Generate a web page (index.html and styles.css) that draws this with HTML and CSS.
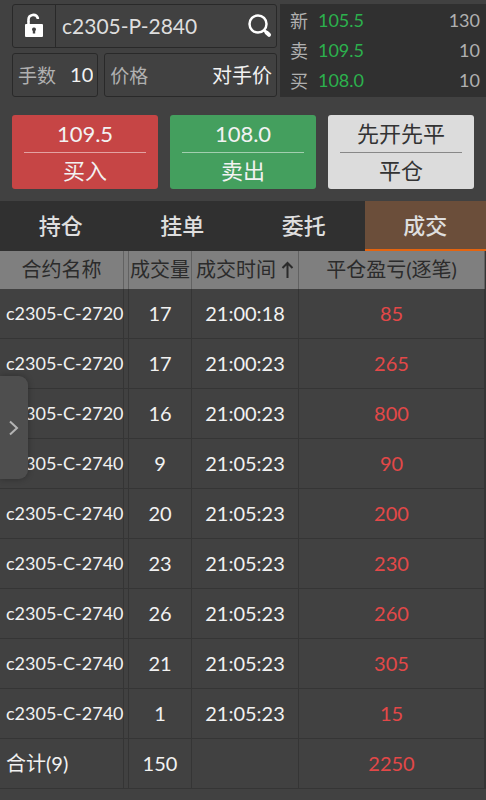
FILE: index.html
```html
<!DOCTYPE html>
<html lang="zh-CN">
<head>
    <meta charset="UTF-8">
    <meta name="viewport" content="width=device-width, initial-scale=1">
    <title>成交</title>
    <link rel="stylesheet" href="styles.css">
</head>
<body>
<header class="top">
    <form class="order">
        <div class="field contract">
            <button type="button" class="lock" aria-label="锁定合约">
                <svg width="20" height="26" viewBox="0 0 20 26">
                    <path d="M4.500 8.500V6.500a4.800 4.800 0 0 1 9.300-1.500V6" fill="none" stroke="#fff" stroke-width="2.600"/>
                    <path fill="#fff" fill-rule="evenodd" d="M2 11h16a1 1 0 0 1 1 1v11a1 1 0 0 1-1 1H2a1 1 0 0 1-1-1V12a1 1 0 0 1 1-1zM10 14.500a2 2 0 0 0-1.200 3.600V20.500h2.400v-2.400A2 2 0 0 0 10 14.500z"/>
                    <path d="M4.500 8v4" fill="none" stroke="#fff" stroke-width="2.600"/>
                </svg>
            </button>
            <input type="text" class="code" aria-label="合约" value="c2305-P-2840">
            <button type="button" class="search" aria-label="搜索">
                <svg width="26" height="26" viewBox="0 0 26 26" fill="none" stroke="#fff" stroke-linecap="round">
                    <circle cx="11" cy="11" r="8.500" stroke-width="2.500"/>
                    <path d="M17.500 17.500l1.500 1.500" stroke-width="2.500"/>
                    <path d="M19.500 19.500l2.500 2.300" stroke-width="4"/>
                </svg>
            </button>
        </div>
        <div class="field lots">
            <label for="lots">手数</label>
            <input type="text" id="lots" value="10">
        </div>
        <div class="field price">
            <label for="price">价格</label>
            <input type="text" id="price" value="对手价">
        </div>
    </form>
    <div class="quote">
        <div class="quote-row"><span>新</span><b>105.5</b><span>130</span></div>
        <div class="quote-row"><span>卖</span><b>109.5</b><span>10</span></div>
        <div class="quote-row"><span>买</span><b>108.0</b><span>10</span></div>
    </div>
</header>

<div class="actions">
    <button type="button" class="action buy"><span>109.5</span><span>买入</span></button>
    <button type="button" class="action sell"><span>108.0</span><span>卖出</span></button>
    <button type="button" class="action close"><span>先开先平</span><span>平仓</span></button>
</div>

<nav class="tabs">
    <a href="#position">持仓</a>
    <a href="#pending">挂单</a>
    <a href="#orders">委托</a>
    <a href="#trades" class="active">成交</a>
</nav>

<main>
    <table class="trades" id="trades">
        <colgroup>
            <col class="col-name">
            <col class="col-volume">
            <col class="col-time">
            <col>
        </colgroup>
        <thead>
        <tr>
            <th>合约名称</th>
            <th>成交量</th>
            <th>成交时间<svg class="sort" width="13" height="18" viewBox="0 0 13 18" fill="none" stroke="#2b2b2b" stroke-width="2"><path d="M6.500 17V2M1.500 7l5-5 5 5"/></svg></th>
            <th>平仓盈亏(逐笔)</th>
        </tr>
        </thead>
        <tbody>
        <tr><td>c2305-C-2720</td><td>17</td><td>21:00:18</td><td>85</td></tr>
        <tr><td>c2305-C-2720</td><td>17</td><td>21:00:23</td><td>265</td></tr>
        <tr><td>c2305-C-2720</td><td>16</td><td>21:00:23</td><td>800</td></tr>
        <tr><td>c2305-C-2740</td><td>9</td><td>21:05:23</td><td>90</td></tr>
        <tr><td>c2305-C-2740</td><td>20</td><td>21:05:23</td><td>200</td></tr>
        <tr><td>c2305-C-2740</td><td>23</td><td>21:05:23</td><td>230</td></tr>
        <tr><td>c2305-C-2740</td><td>26</td><td>21:05:23</td><td>260</td></tr>
        <tr><td>c2305-C-2740</td><td>21</td><td>21:05:23</td><td>305</td></tr>
        <tr><td>c2305-C-2740</td><td>1</td><td>21:05:23</td><td>15</td></tr>
        </tbody>
        <tfoot>
        <tr><td>合计(9)</td><td>150</td><td></td><td>2250</td></tr>
        </tfoot>
    </table>
</main>

<!-- side drawer handle -->
<button type="button" class="drawer" aria-label="展开">
    <svg width="10" height="16" viewBox="0 0 10 16" fill="none" stroke="#b4b4b4" stroke-width="2"><path d="M1 1.500L8 8l-7 6.500"/></svg>
</button>
</body>
</html>
```
FILE: styles.css
```css
* {
    box-sizing: border-box;
}

body {
    margin: 0;
    background-color: #414141;
    color: #f2f2f2;
    font-family: Lato, "Noto Sans CJK SC", sans-serif;
    font-size: 20px;
}

button, input {
    font: inherit;
    color: inherit;
    background: none;
    border: none;
    padding: 0;
    margin: 0;
    min-width: 0;
}

button {
    cursor: pointer;
}

.top {
    display: grid;
    grid-template-columns: 9fr 7fr;
    gap: 3px;
    padding: 4px 0 0 12px;
}

.order {
    display: grid;
    grid-template-columns: 1fr 2fr;
    gap: 5px 6px;
}

.field {
    display: flex;
    align-items: center;
    height: 44px;
    border: 1px solid #292929;
    border-radius: 3px;
}

.field label {
    color: #b0b0b0;
    font-size: 19px;
    white-space: nowrap;
}

.field input {
    flex: 1;
    width: 0;
}

.contract {
    grid-column: 1 / 3;
}

.lock {
    width: 43px;
    height: 42px;
    border-right: 1px solid #292929;
    display: grid;
    place-items: center;
}

.contract .code {
    padding: 0 0 2px 6px;
    font-size: 21px;
    color: #dedede;
}

.search {
    display: grid;
    margin-right: 3px;
}

.lots, .price {
    padding: 0 4px 2px 5px;
}

.lots input, .price input {
    text-align: right;
}

.quote {
    background-color: #303030;
    padding: 1px 6px 0 10px;
}

.quote-row {
    display: flex;
    align-items: center;
    height: 30px;
    color: #b0b0b0;
    font-size: 18px;
}

.quote-row b {
    flex: 1;
    padding-left: 10px;
    font-weight: normal;
    color: #2cb14d;
}

.actions {
    display: grid;
    grid-template-columns: repeat(3, 1fr);
    gap: 12px;
    padding: 18px 12px 12px;
}

.action {
    height: 74px;
    padding: 0 12px;
    border-radius: 3px;
    font-size: 22px;
    line-height: 36px;
}

.action span {
    display: block;
}

.action span:first-child {
    border-bottom: 1px solid #ffffff80;
}

.buy {
    background-color: #c64545;
}

.sell {
    background-color: #449f5e;
}

.close {
    background-color: #dcdcdc;
    color: #333;
}

.close span:first-child {
    border-color: #888;
}

.tabs {
    display: flex;
    background-color: #303030;
}

.tabs a {
    flex: 1;
    height: 50px;
    line-height: 50px;
    font-size: 22px;
    font-weight: 500;
    text-align: center;
    text-decoration: none;
    color: #dedede;
}

.tabs .active {
    background-color: #6b4e3a;
    box-shadow: inset 0 -2px #e5640f;
}

.trades {
    width: 100%;
    table-layout: fixed;
    border-collapse: separate;
    border-spacing: 0;
    border-right: 1px solid #353535;
}

.col-name {
    width: 129px;
}

.col-volume {
    width: 63px;
}

.col-time {
    width: 107px;
}

.trades th, .trades td {
    padding: 0 0 2px;
    text-align: center;
    white-space: nowrap;
    border-right: 1px solid #353535;
}

.trades th {
    height: 38px;
    background-color: #7f7f7f;
    border-color: #626262;
    color: #2b2b2b;
    font-size: 20px;
    font-weight: normal;
    line-height: 36px;
}

.trades td {
    height: 50px;
    border-bottom: 1px solid #353535;
}

.trades th:first-child, .trades td:first-child {
    background-image: linear-gradient(#353535, #353535);
    background-size: 1px 100%;
    background-position: right 4px top;
    background-repeat: no-repeat;
}

.trades th:first-child {
    padding-right: 5px;
    background-image: linear-gradient(#626262, #626262);
}

.trades td:first-child {
    padding-left: 6px;
    text-align: left;
    font-size: 18px;
}

.trades td:last-child {
    color: #e34848;
}

.trades tfoot td:first-child {
    font-size: 20px;
}

.sort {
    margin-left: 5px;
    vertical-align: -2px;
}

.drawer {
    position: absolute;
    left: 0;
    top: 376px;
    width: 28px;
    height: 103px;
    padding-left: 9px;
    display: flex;
    align-items: center;
    background-color: #4e4e4e;
    border-radius: 0 9px 9px 0;
    box-shadow: 0 0 6px #0000004d;
}
```
